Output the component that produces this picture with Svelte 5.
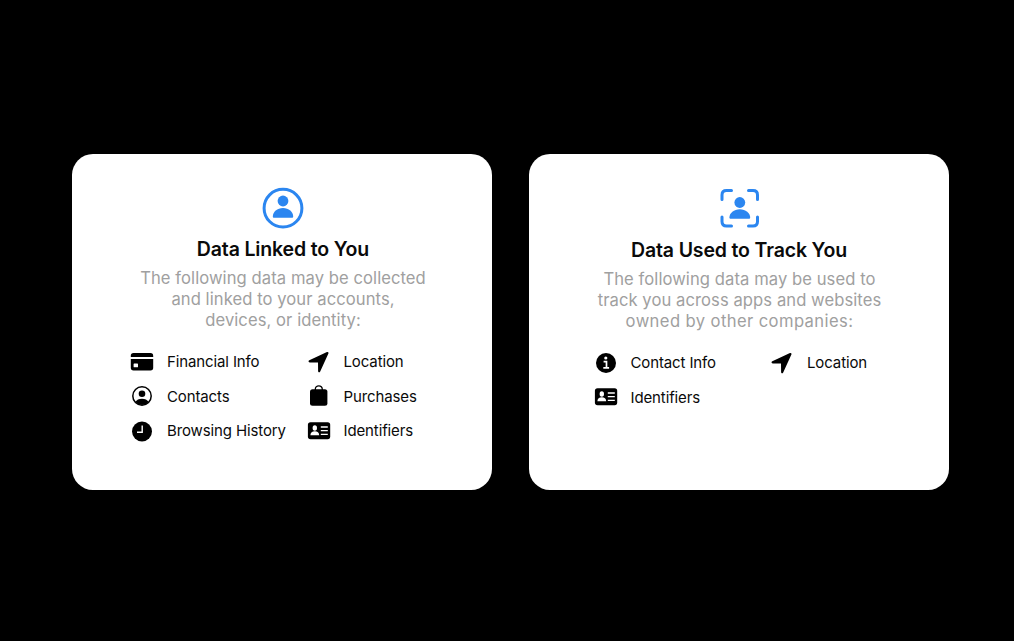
<script lang="ts">
	type Item = { icon: string; label: string };
	type Card = { kind: string; title: string; lines: string[]; items: Item[] };

	const cards: Card[] = [
		{
			kind: 'linked',
			title: 'Data Linked to You',
			lines: [
				'The following data may be collected',
				'and linked to your accounts,',
				'devices, or identity:'
			],
			items: [
				{ icon: 'card', label: 'Financial Info' },
				{ icon: 'location', label: 'Location' },
				{ icon: 'contacts', label: 'Contacts' },
				{ icon: 'bag', label: 'Purchases' },
				{ icon: 'clock', label: 'Browsing History' },
				{ icon: 'id', label: 'Identifiers' }
			]
		},
		{
			kind: 'track',
			title: 'Data Used to Track You',
			lines: [
				'The following data may be used to',
				'track you across apps and websites',
				'owned by other companies:'
			],
			items: [
				{ icon: 'info', label: 'Contact Info' },
				{ icon: 'location', label: 'Location' },
				{ icon: 'id', label: 'Identifiers' }
			]
		}
	];
</script>

<main class="privacy">
	{#each cards as card}
		<section class="card {card.kind}">
			<svg class="hero" viewBox="0 0 42 42" aria-hidden="true">
				{#if card.kind === 'linked'}
					<circle cx="21" cy="21.2" r="18.9" fill="none" stroke="currentColor" stroke-width="3" />
					<circle cx="21" cy="14" r="5.4" fill="currentColor" />
					<path
						d="M10.8 29.4c0-4.6 4.5-8.4 10.2-8.4s10.2 3.8 10.2 8.4c0 .9-.5 1.3-1.3 1.3H12.1c-.8 0-1.3-.4-1.3-1.3z"
						fill="currentColor"
					/>
				{:else}
					<path
						d="M3 12.6V8Q3 3.6 7.5 3.6H12.5M29.5 3.6h4.5Q38.5 3.6 38.5 8V12.6M38.5 30v4.5Q38.5 39 34 39H29.5M12.5 39H7.5Q3 39 3 34.5V30"
						fill="none"
						stroke="currentColor"
						stroke-width="3"
						stroke-linecap="round"
					/>
					<circle cx="20.8" cy="15.5" r="5.4" fill="currentColor" />
					<path
						d="M10.4 30.5c0-4.5 4.6-8.3 10.4-8.3s10.4 3.8 10.4 8.3c0 .9-.6 1.3-1.4 1.3h-18c-.8 0-1.4-.4-1.4-1.3z"
						fill="currentColor"
					/>
				{/if}
			</svg>
			<h2>{card.title}</h2>
			<p>
				{#each card.lines as line}
					<span>{line}</span>
				{/each}
			</p>
			<ul>
				{#each card.items as item}
					<li>
						<svg class="icon" viewBox="0 0 24 24" aria-hidden="true">
							{#if item.icon === 'card'}
								<path d="M.8 7V5.7Q.8 3 3.5 3h17Q23.2 3 23.2 5.7V7z" />
								<path
									fill-rule="evenodd"
									d="M.8 9h22.4v8.8q0 2.7-2.7 2.7h-17Q.8 20.5.8 17.8zM4.2 13.6q-.6 0-.6.6v2.5q0 .6.6.6h3.2q.6 0 .6-.6v-2.5q0-.6-.6-.6z"
								/>
							{:else if item.icon === 'contacts'}
								<circle cx="12" cy="12" r="9.2" fill="none" stroke="currentColor" stroke-width="1.5" />
								<circle cx="12" cy="9.7" r="3.3" />
								<path d="M5.2 18.1c1.3-2.3 3.9-3.4 6.8-3.4s5.5 1.1 6.8 3.4a9.2 9.2 0 0 1-13.6 0z" />
							{:else if item.icon === 'clock'}
								<circle cx="12" cy="12.5" r="10" />
								<path class="cut" d="M12.2 6.5v6.7H7" stroke-width="1.4" />
							{:else if item.icon === 'location'}
								<path
									d="M20 2.1 2.3 10.3c-1.2.6-1 2.1.4 2.1l8.3.1.1 8.5c0 1.4 1.5 1.7 2.1.4L21.4 3.5c.5-1-.4-1.9-1.4-1.4z"
								/>
							{:else if item.icon === 'bag'}
								<path d="M8.3 7V5.3a3.5 3.5 0 0 1 7 0V7" fill="none" stroke="currentColor" stroke-width="1.3" />
								<rect x="3" y="5.2" width="17.4" height="16.5" rx="2.5" />
							{:else if item.icon === 'id'}
								<rect x=".9" y="3.2" width="22.3" height="17" rx="2.6" />
								<ellipse cx="7.8" cy="9" rx="2.2" ry="2.7" fill="#fff" />
								<path d="M3.4 16.2c0-2.4 1.8-4 4.4-4s4.4 1.6 4.4 4z" fill="#fff" />
								<path class="cut" d="M13.8 8h7M13.8 11.7h7M13.8 15.4h7" stroke-width="1.3" />
							{:else}
								<circle cx="12" cy="12" r="10" />
								<circle cx="11.8" cy="7" r="1.6" fill="#fff" />
								<path class="cut" d="M9.6 10.6h2.9v6.2M9.3 16.9h5.8" stroke-width="1.7" />
							{/if}
						</svg>
						<span>{item.label}</span>
					</li>
				{/each}
			</ul>
		</section>
	{/each}
</main>

<style>
	:global(body) {
		background: #000;
	}

	.privacy {
		display: flex;
		justify-content: center;
		align-items: center;
		gap: 37px;
		height: 641px;
		padding: 3px 0 0 7px;
		box-sizing: border-box;
		font-family: Inter, 'Liberation Sans', sans-serif;
		color: #0a0a0a;
	}

	.card {
		display: flex;
		flex-direction: column;
		align-items: center;
		width: 420px;
		height: 336px;
		padding: 33px 0 0 2px;
		box-sizing: border-box;
		border-radius: 21px;
		background: #fff;
	}

	.hero {
		display: block;
		width: 42px;
		height: 42px;
		color: #2b86f0;
	}

	h2 {
		margin: 8px 0 0;
		font-size: 19.5px;
		line-height: 24px;
		font-weight: 600;
		letter-spacing: -0.15px;
	}

	p {
		margin: 7px 0 0;
		font-size: 16.6px;
		line-height: 21px;
		letter-spacing: 0.07px;
		color: #a0a0a0;
		text-align: center;
	}

	p span {
		display: block;
		white-space: nowrap;
	}

	ul {
		display: grid;
		grid-template-columns: 176.5px 130px;
		grid-auto-rows: 34.4px;
		align-self: flex-start;
		margin: 13.8px 0 0 56px;
		padding: 0;
		list-style: none;
	}

	.track h2 {
		margin-top: 9px;
		padding-right: 2px;
	}

	.track p {
		padding-right: 1px;
	}

	.track p span:last-child {
		letter-spacing: 0.4px;
	}

	.track ul {
		margin: 13.3px 0 0 62.5px;
		grid-auto-rows: 34.8px;
	}

	li {
		display: flex;
		align-items: center;
		gap: 13px;
		font-size: 15px;
		letter-spacing: -0.12px;
		white-space: nowrap;
	}

	.icon {
		flex: none;
		width: 24px;
		height: 24px;
		fill: currentColor;
		color: #000;
	}

	.cut {
		fill: none;
		stroke: #fff;
	}
</style>
